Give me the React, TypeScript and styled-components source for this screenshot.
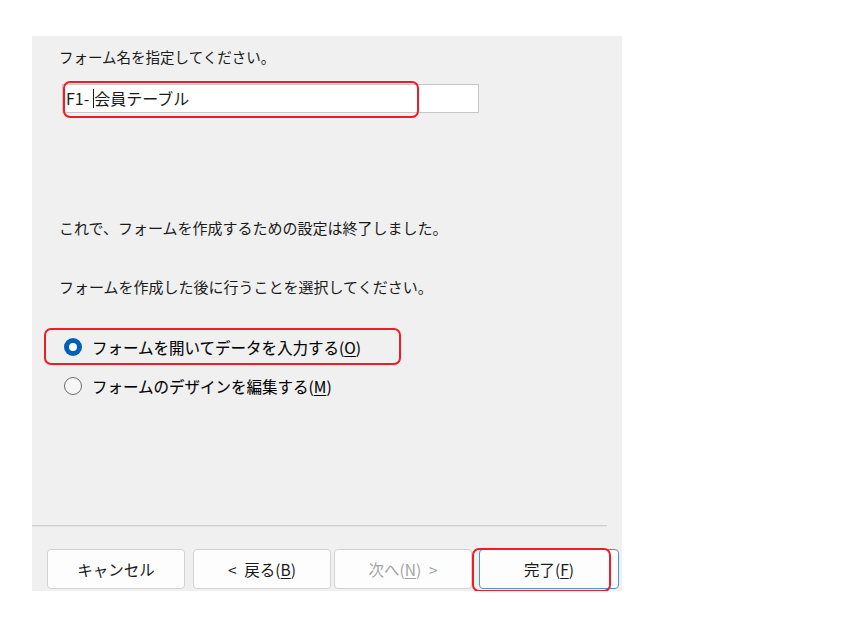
import React from "react";
import styled, { createGlobalStyle } from "styled-components";

const GlobalStyle = createGlobalStyle`
  html, body {
    margin: 0;
    background: #ffffff;
  }
  body {
    font-family: "Noto Sans CJK JP", "Noto Sans", sans-serif;
    color: #1a1a1a;
  }
`;

const App = () => {
  return (
    <>
      <GlobalStyle />
      <Panel>
        <Content>
          <Label>フォーム名を指定してください。</Label>
          <Field>
            F1-
            <Caret />
            会員テーブル
            <Mark $left={0} $top={-4} $width={356} $height={37} />
          </Field>
          <Text $top={105}>これで、フォームを作成するための設定は終了しました。</Text>
          <Text $top={39}>フォームを作成した後に行うことを選択してください。</Text>
          <RadioRow $top={38}>
            <Radio $checked />
            <RadioLabel>
              フォームを開いてデータを入力する(<u>O</u>)
            </RadioLabel>
            <Mark $left={-15} $top={-7} $width={357} $height={37} />
          </RadioRow>
          <RadioRow $top={15}>
            <Radio />
            <RadioLabel>
              フォームのデザインを編集する(<u>M</u>)
            </RadioLabel>
          </RadioRow>
        </Content>
        <Separator />
        <Footer>
          <Button $lead={0}>キャンセル</Button>
          <Button $lead={8}>
            &lt;&ensp;戻る(<u>B</u>)
          </Button>
          <Button $lead={3} $disabled>
            次へ(<u>N</u>)&ensp;&gt;
          </Button>
          <Button $lead={7} $primary>
            完了(<u>F</u>)
            <Mark $left={-8} $top={-2} $width={139} $height={44} />
          </Button>
        </Footer>
      </Panel>
    </>
  );
};

export default App;

const Panel = styled.div`
  margin: 36px 0 0 32px;
  width: 590px;
  height: 555px;
  background: #f0f0f0;
  display: flex;
  flex-direction: column;
`;

const Content = styled.div`
  padding: 11px 27px 0 27px;
  display: flex;
  flex-direction: column;
  flex: 1;
`;

const Label = styled.div`
  font-size: 14.5px;
  line-height: 20px;
  height: 20px;
`;

const Field = styled.div`
  position: relative;
  margin: 17px 0 0 3px;
  width: 417px;
  height: 29px;
  box-sizing: border-box;
  border: 1px solid #c6c6c6;
  background: #ffffff;
  padding: 0 0 0 3px;
  font-size: 16px;
  line-height: 27px;
  display: flex;
  align-items: center;
  white-space: nowrap;
`;

const Caret = styled.span`
  display: inline-block;
  width: 1px;
  height: 19px;
  background: #1a1a1a;
  margin: 0 0 0 4px;
`;

const Mark = styled.span<{ $left: number; $top: number; $width: number; $height: number }>`
  position: absolute;
  left: ${(p) => p.$left}px;
  top: ${(p) => p.$top}px;
  width: ${(p) => p.$width}px;
  height: ${(p) => p.$height}px;
  box-sizing: border-box;
  border: 2px solid #ee1c25;
  border-radius: 7px;
  pointer-events: none;
`;

const Text = styled.div<{ $top: number }>`
  margin-top: ${(p) => p.$top}px;
  font-size: 15px;
  line-height: 20px;
  height: 20px;
`;

const RadioRow = styled.div<{ $top: number }>`
  position: relative;
  margin-top: ${(p) => p.$top}px;
  height: 24px;
  display: flex;
  align-items: center;
  gap: 10px;
  padding-left: 5px;
`;

const Radio = styled.span<{ $checked?: boolean }>`
  width: 18px;
  height: 18px;
  box-sizing: border-box;
  border-radius: 50%;
  flex: none;
  display: flex;
  align-items: center;
  justify-content: center;
  background: ${(p) => (p.$checked ? "#005fb8" : "#f6f6f6")};
  border: ${(p) => (p.$checked ? "none" : "1px solid #6e6e6e")};
  &::after {
    content: "";
    display: ${(p) => (p.$checked ? "block" : "none")};
    width: 8px;
    height: 8px;
    border-radius: 50%;
    background: #ffffff;
  }
`;

const RadioLabel = styled.span`
  font-size: 15.5px;
  line-height: 24px;
  color: #000000;
  -webkit-text-stroke: 0.1px #000000;
  u {
    text-underline-offset: 2px;
  }
`;

const Separator = styled.div`
  height: 1px;
  width: 575px;
  background: #cfcfcf;
  border-bottom: 1px solid #e4e4e4;
  margin-bottom: 22px;
`;

const Footer = styled.div`
  display: flex;
  align-items: center;
  padding: 0 0 0 15px;
  height: 40px;
  margin-bottom: 2px;
`;

const Button = styled.div<{ $lead: number; $disabled?: boolean; $primary?: boolean }>`
  position: relative;
  margin-left: ${(p) => p.$lead}px;
  width: ${(p) => (p.$primary ? 140 : 138)}px;
  height: 40px;
  box-sizing: border-box;
  border: 1px solid ${(p) => (p.$primary ? "#4a95d9" : "#d3d3d3")};
  border-radius: 4px;
  background: #fdfdfd;
  display: flex;
  align-items: center;
  justify-content: center;
  font-size: 15.5px;
  color: ${(p) => (p.$disabled ? "#a3a3a3" : "#1a1a1a")};
  u {
    text-underline-offset: 2px;
  }
`;
